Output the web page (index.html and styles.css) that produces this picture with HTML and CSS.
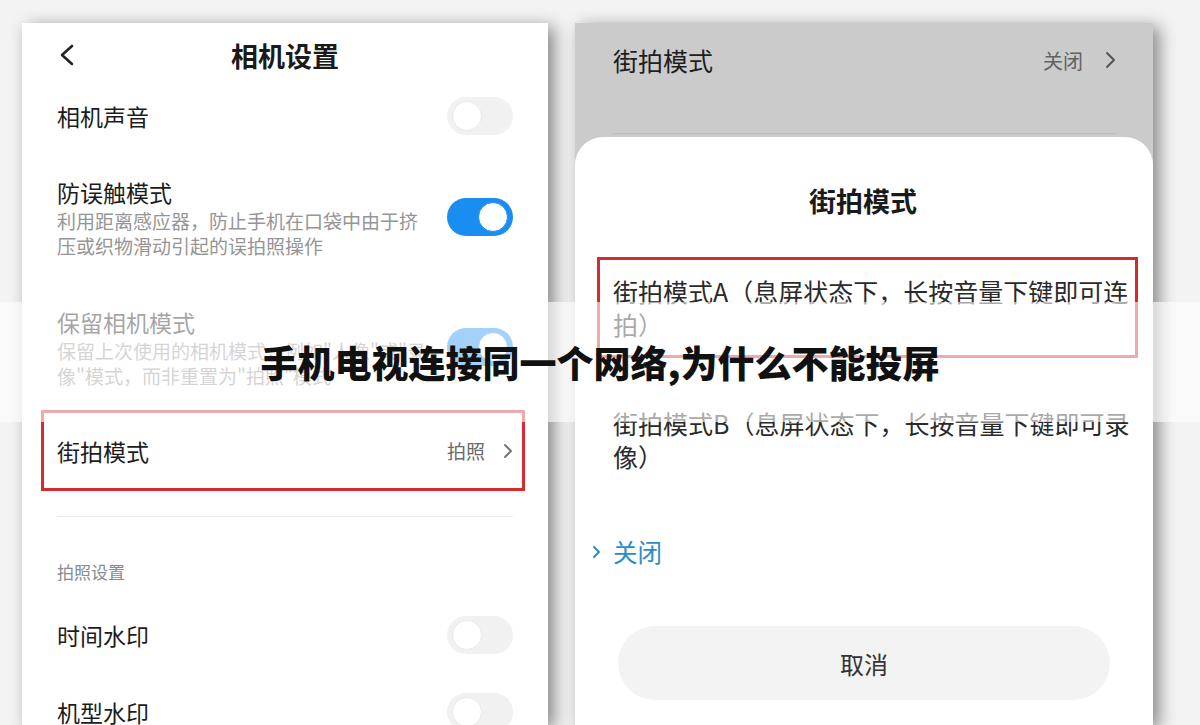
FILE: index.html
```html
<!DOCTYPE html>
<html lang="zh-CN">
<head>
  <meta charset="UTF-8" />
  <meta name="viewport" content="width=device-width, initial-scale=1.0" />
  <title>手机电视连接同一个网络,为什么不能投屏</title>
  <link rel="stylesheet" href="styles.css">
</head>
<body>
  <div class="stage">
    <!-- left shot: camera settings list -->
    <div class="phone settings">
      <div class="topbar">
        <svg class="back" width="16" height="22" viewBox="0 0 16 22"><polyline points="13,2 3,11 13,20" /></svg>
        <h2>相机设置</h2>
        <span></span>
      </div>

      <div class="row sound">
        <span class="label">相机声音</span>
        <div class="switch"></div>
      </div>

      <div class="row touch">
        <div>
          <div class="label">防误触模式</div>
          <div class="desc">利用距离感应器，防止手机在口袋中由于挤<br>压或织物滑动引起的误拍照操作</div>
        </div>
        <div class="switch on"></div>
      </div>

      <div class="row keep">
        <div>
          <div class="label">保留相机模式</div>
          <div class="desc">保留上次使用的相机模式，例如"人像"或"录<br>像"模式，而非重置为"拍照"模式</div>
        </div>
        <div class="switch on"></div>
      </div>

      <div class="row street-row">
        <span class="label">街拍模式</span>
        <span class="value">拍照 <svg width="10" height="16" viewBox="0 0 10 16"><polyline points="2,2 8,8 2,14" /></svg></span>
      </div>

      <div class="divider"></div>

      <div class="section">拍照设置</div>

      <div class="row mark">
        <span class="label">时间水印</span>
        <div class="switch"></div>
      </div>
      <div class="row mark">
        <span class="label">机型水印</span>
        <div class="switch"></div>
      </div>
    </div>

    <!-- right shot: street mode bottom sheet -->
    <div class="phone street">
      <div class="dimmed">
        <div class="dimmed-row">
          <span class="label">街拍模式</span>
          <span class="value">关闭 <svg width="12" height="18" viewBox="0 0 12 18"><polyline points="2,2 9,9 2,16" /></svg></span>
        </div>
        <div class="dimmed-line"></div>
      </div>

      <div class="sheet">
        <h3>街拍模式</h3>
        <div class="option picked">街拍模式A（息屏状态下，长按音量下键即可连<br>拍）</div>
        <div class="option">街拍模式B（息屏状态下，长按音量下键即可录<br>像）</div>
        <div class="option-off"><svg width="10" height="16" viewBox="0 0 10 16"><polyline points="2,3 7,8 2,13" /></svg>关闭</div>
        <button class="cancel">取消</button>
      </div>
    </div>
  </div>

  <div class="banner">手机电视连接同一个网络,为什么不能投屏</div>
</body>
</html>
```

FILE: styles.css
```css
html, body {
  margin: 0;
  padding: 0;
  height: 725px;
  overflow: hidden;
}
body {
  font-family: "Noto Sans CJK SC", "Noto Sans", sans-serif;
  background-color: #f3f3f3;
  color: #1c1c1c;
}
.stage {
  display: flex;
  gap: 27px;
  padding: 23px 0 0 22px;
}
.phone {
  height: 702px;
  box-shadow: 6px 4px 16px rgba(0, 0, 0, 0.45);
  overflow: hidden;
}

/* ---- left ---- */
.settings {
  width: 526px;
  background-color: #fff;
  box-sizing: border-box;
  padding: 0 35px;
}
.topbar {
  height: 64px;
  display: grid;
  grid-template-columns: 1fr auto 1fr;
  align-items: center;
}
.back {
  margin-left: 2px;
  fill: none;
  stroke: #222;
  stroke-width: 2.6;
  stroke-linecap: round;
  stroke-linejoin: round;
}
.topbar h2 {
  margin: 0;
  font-size: 27px;
  font-weight: 700;
  color: #1a1a1a;
}
.row {
  display: flex;
  align-items: center;
  justify-content: space-between;
}
.label {
  font-size: 23px;
  line-height: 30px;
}
.desc {
  font-size: 19px;
  line-height: 25px;
  color: #959595;
  margin-top: 1px;
}
.sound {
  height: 58px;
}
.touch {
  height: 144px;
}
.keep {
  height: 116px;
}
.switch {
  width: 66px;
  height: 38px;
  border-radius: 19px;
  background-color: #f1f1f1;
  position: relative;
  flex-shrink: 0;
}
.switch::after {
  content: "";
  position: absolute;
  left: 5px;
  top: 4px;
  width: 28px;
  height: 28px;
  border-radius: 50%;
  background-color: #fff;
  border: 1px solid #e9e9e9;
}
.switch.on {
  background-color: #1a8df0;
}
.switch.on::after {
  left: auto;
  right: 5px;
  border-color: #1a8df0;
}
.street-row {
  margin: 5px -12px 0 -16px;
  height: 75px;
  border: 3px solid #d42a30;
  padding: 0 9px 0 13px;
}
.value {
  font-size: 19px;
  color: #6a6a6a;
  display: flex;
  align-items: center;
  gap: 18px;
}
.value svg {
  fill: none;
  stroke: #777;
  stroke-width: 2;
  stroke-linecap: round;
  stroke-linejoin: round;
}
.divider {
  margin-top: 25px;
  height: 1px;
  background-color: #ececec;
}
.section {
  padding-top: 43px;
  padding-bottom: 12px;
  line-height: 24px;
  font-size: 17px;
  color: #868b94;
}
.mark {
  height: 77px;
}

/* ---- right ---- */
.street {
  width: 578px;
  background-color: #cbcbcb;
}
.dimmed {
  padding: 22px 36px 0 38px;
}
.dimmed-row {
  display: flex;
  justify-content: space-between;
  align-items: center;
  height: 30px;
}
.dimmed-row .label {
  font-size: 25px;
  color: #1e1e1e;
}
.dimmed-row .value {
  font-size: 20px;
  color: #626262;
  gap: 22px;
}
.dimmed-row .value svg {
  stroke: #555;
}
.dimmed-line {
  margin-top: 58px;
  height: 1px;
  background-color: #bdbdbd;
}
.sheet {
  margin-top: 3px;
  height: 620px;
  background-color: #fff;
  border-radius: 28px 28px 0 0;
  padding: 0 15px 0 22px;
}
.sheet h3 {
  margin: 0 0 0 -9px;
  padding-top: 48px;
  line-height: 32px;
  font-size: 27px;
  font-weight: 600;
  text-align: center;
  color: #1a1a1a;
}
.option {
  margin-top: 31px;
  border: 3px solid transparent;
  padding: 14.5px 0 14.5px 13px;
  font-size: 25px;
  line-height: 33px;
  color: #2a2a2a;
  white-space: nowrap;
}
.option.picked {
  margin-top: 40px;
  border-color: #d42a30;
}
.option-off {
  margin: 45px 0 0 -5px;
  display: flex;
  align-items: center;
  gap: 11px;
  font-size: 24.5px;
  line-height: 33px;
  color: #2b8dc8;
}
.option-off svg {
  fill: none;
  stroke: #2b8dc8;
  stroke-width: 2;
  stroke-linecap: round;
  stroke-linejoin: round;
}
.cancel {
  display: block;
  margin: 58px 28px 0 21px;
  width: calc(100% - 49px);
  height: 74px;
  border: none;
  border-radius: 37px;
  background-color: #f3f3f3;
  font-family: inherit;
  font-size: 24px;
  color: #333;
}

/* ---- caption band ---- */
.banner {
  position: absolute;
  left: 0;
  right: 0;
  top: 302px;
  height: 120px;
  display: flex;
  align-items: center;
  justify-content: center;
  background-color: rgba(255, 255, 255, 0.6);
  font-size: 37px;
  font-weight: 900;
  color: #111;
}
```
